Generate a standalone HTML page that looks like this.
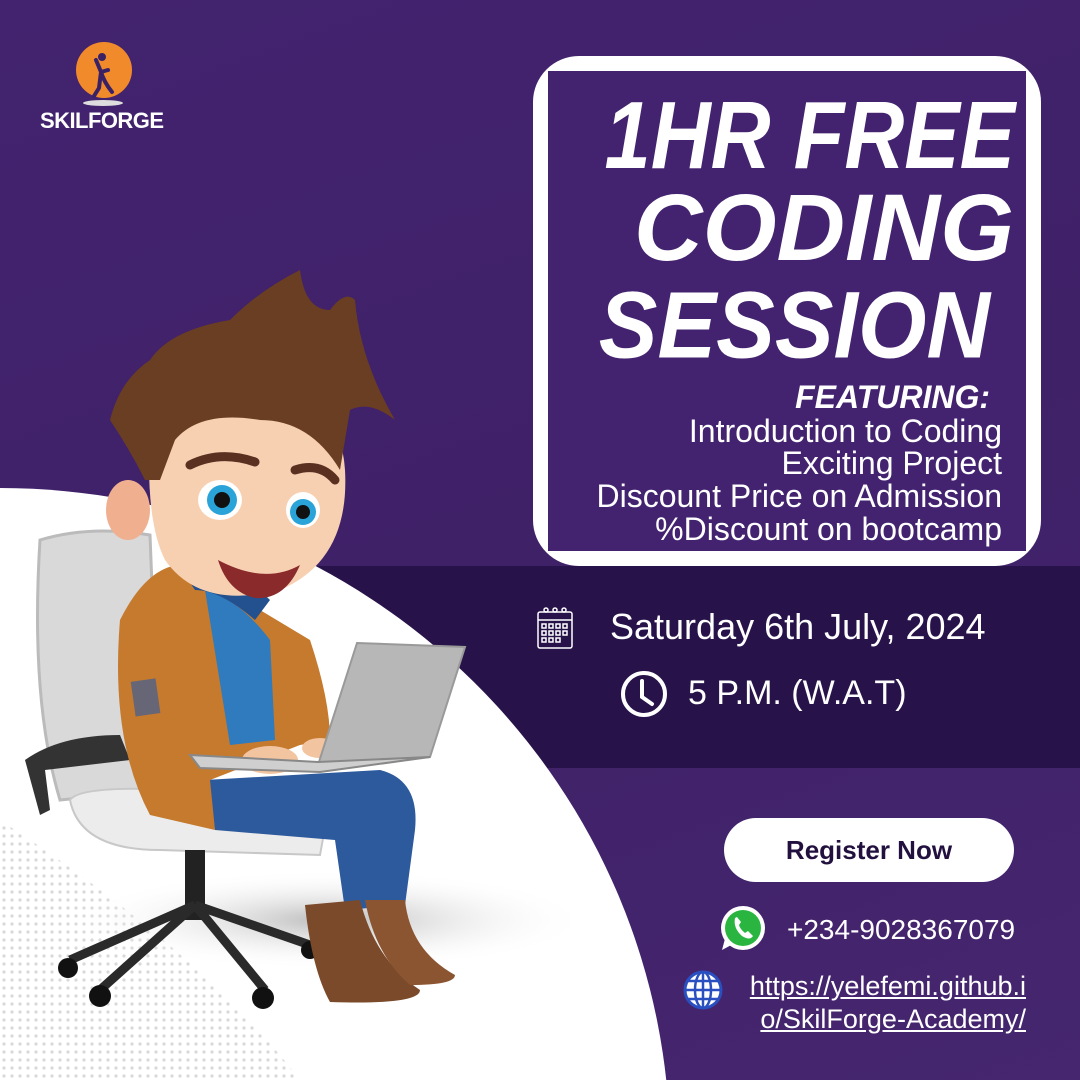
<!DOCTYPE html>
<html><head><meta charset="utf-8"><style>
*{margin:0;padding:0;box-sizing:border-box}
html,body{width:1080px;height:1080px;overflow:hidden}
body{position:relative;font-family:"Liberation Sans",sans-serif;background:linear-gradient(160deg,#43236f 0%,#3f2168 50%,#45266f 100%)}
.abs{position:absolute}
.band{left:0;top:566px;width:1080px;height:202px;background:#27124a}
.box{left:533px;top:56px;width:508px;height:510px;background:#fff;border-radius:46px}
.inner{left:548px;top:71px;width:478px;height:480px;background:#43236f}
.t{color:#fff;font-weight:bold;font-style:italic;text-align:right;white-space:nowrap;transform-origin:right center}
.l{color:#fff;font-size:32px;line-height:33px;text-align:right;white-space:nowrap;right:78px}
</style></head><body>
<div class="abs band"></div>
<div class="abs box"></div>
<div class="abs inner"></div>
<div class="abs t" style="right:65px;top:88px;font-size:83px;line-height:96px;transform:scaleY(1.15)">1HR FREE</div>
<div class="abs t" style="right:66px;top:180px;font-size:95px;line-height:96px">CODING</div>
<div class="abs t" style="right:90px;top:277px;font-size:88px;line-height:96px;transform:scaleY(1.08)">SESSION</div>
<div class="abs t" style="right:90px;top:380px;font-size:32px;line-height:34px">FEATURING:</div>
<div class="abs l" style="top:415px">Introduction to Coding</div>
<div class="abs l" style="top:447px">Exciting Project</div>
<div class="abs l" style="top:480px">Discount Price on Admission</div>
<div class="abs l" style="top:513px">%Discount on bootcamp</div>

<svg class="abs" style="left:0;top:0" width="1080" height="1080" viewBox="0 0 1080 1080">
<defs>
<radialGradient id="sh" cx="0.5" cy="0.5" r="0.5"><stop offset="0" stop-color="#bbb"/><stop offset="1" stop-color="#fff" stop-opacity="0"/></radialGradient>
<pattern id="dots" width="8" height="8" patternUnits="userSpaceOnUse"><circle cx="4" cy="4" r="1.6" fill="#cfcfcf"/></pattern>
</defs>
<ellipse cx="0" cy="1150" rx="670" ry="662" fill="#fff"/>
<path d="M0 820 L0 1080 L300 1080 Q200 950 0 820Z" fill="url(#dots)" opacity="0.8"/>
<ellipse cx="330" cy="920" rx="260" ry="50" fill="url(#sh)"/>
<circle cx="104" cy="70" r="28" fill="#f08a2a"/>
<path d="M96 60 L101 72 L99 88 L94 96 M101 72 L108 70 M101 72 Q104 82 112 92" stroke="#3a2166" stroke-width="4" fill="none" stroke-linecap="round"/>
<circle cx="102" cy="57" r="4" fill="#3a2166"/>
<ellipse cx="103" cy="103" rx="20" ry="3" fill="#ddd"/>
<text x="40" y="128" font-family="Liberation Sans" font-weight="bold" font-size="22" fill="#fff" textLength="124">SKILFORGE</text>
<path d="M40 540 Q90 525 150 535 L160 790 L60 800 Q30 700 40 540Z" fill="#d9d9d9" stroke="#bbb" stroke-width="3"/>
<path d="M25 760 Q60 735 120 735 L130 760 L45 770 L50 810 L40 815Z" fill="#333"/>
<path d="M70 800 Q80 785 180 790 L330 800 L320 855 L160 850 Q80 850 70 800Z" fill="#ececec" stroke="#c8c8c8" stroke-width="2"/>
<rect x="185" y="850" width="20" height="70" fill="#222"/>
<path d="M195 905 L70 960 M195 905 L100 990 M195 905 L265 990 M195 905 L310 945" stroke="#2a2a2a" stroke-width="9"/>
<circle cx="68" cy="968" r="10" fill="#111"/><circle cx="100" cy="996" r="11" fill="#111"/><circle cx="263" cy="998" r="11" fill="#111"/><circle cx="310" cy="950" r="9" fill="#111"/>
<path d="M205 780 L380 770 Q420 780 415 830 L405 905 L345 910 L335 840 L215 830Z" fill="#2c5a9c"/>
<path d="M305 905 L360 900 Q375 960 420 990 Q420 1005 330 1002 Q312 970 305 905Z" fill="#7a4a2a"/>
<path d="M365 900 L405 900 Q410 950 455 975 Q455 985 410 985 Q375 955 365 900Z" fill="#8b5532"/>
<path d="M120 620 Q150 560 190 565 L260 610 L310 640 Q330 700 330 740 L300 745 L210 780 L215 830 L150 815 Q110 740 120 620Z" fill="#c57a2e"/>
<path d="M205 590 Q240 600 270 640 L275 740 L230 745 Z" fill="#2f7bbd"/>
<path d="M180 568 Q230 560 270 600 L255 620 Q220 590 195 590Z" fill="#23508f"/>
<rect x="133" y="680" width="25" height="35" fill="#667" transform="rotate(-8 145 697)"/>
<ellipse cx="270" cy="760" rx="28" ry="14" fill="#f2c4a0"/>
<ellipse cx="320" cy="748" rx="18" ry="10" fill="#f2c4a0"/>
<path d="M357 643 L465 647 L430 757 L318 765Z" fill="#b7b7b7" stroke="#999" stroke-width="2"/>
<path d="M190 755 L318 762 L430 757 L320 772 L200 768Z" fill="#cfcfcf" stroke="#888" stroke-width="2"/>
<ellipse cx="128" cy="510" rx="22" ry="30" fill="#f0b090"/>
<path d="M150 430 Q160 380 250 380 Q340 390 345 470 Q350 560 280 590 Q200 610 165 560 Q145 520 150 430Z" fill="#f7d0b2"/>
<path d="M190 465 Q220 450 255 462" stroke="#5a3020" stroke-width="9" fill="none" stroke-linecap="round"/>
<path d="M295 470 Q320 462 335 480" stroke="#5a3020" stroke-width="9" fill="none" stroke-linecap="round"/>
<ellipse cx="220" cy="500" rx="22" ry="20" fill="#fff"/><circle cx="222" cy="500" r="15" fill="#2aa3d9"/><circle cx="222" cy="500" r="8" fill="#111"/>
<ellipse cx="303" cy="510" rx="17" ry="18" fill="#fff"/><circle cx="303" cy="512" r="13" fill="#2aa3d9"/><circle cx="303" cy="512" r="7" fill="#111"/>
<path d="M218 560 Q265 585 300 565 Q285 600 255 598 Q228 592 218 560Z" fill="#8a2a2a"/>
<path d="M110 420 Q120 380 150 360 Q170 330 230 320 Q260 290 300 270 Q305 310 330 310 Q345 290 355 300 Q360 360 395 420 Q370 400 350 410 Q345 440 340 470 Q310 420 260 420 Q200 410 175 440 L160 480 L145 480 Q130 450 110 420Z" fill="#6a3e22"/>
<g stroke="#fff" stroke-width="1.5" fill="none">
<rect x="538" y="612" width="34" height="36" rx="2"/>
<line x1="538" y1="620" x2="572" y2="620"/>
<circle cx="546" cy="610" r="2"/><circle cx="555" cy="610" r="2"/><circle cx="564" cy="610" r="2"/>
<rect x="542" y="624" width="4" height="4"/><rect x="549" y="624" width="4" height="4"/><rect x="556" y="624" width="4" height="4"/><rect x="563" y="624" width="4" height="4"/>
<rect x="542" y="631" width="4" height="4"/><rect x="549" y="631" width="4" height="4"/><rect x="556" y="631" width="4" height="4"/><rect x="563" y="631" width="4" height="4"/>
<rect x="542" y="638" width="4" height="4"/><rect x="549" y="638" width="4" height="4"/><rect x="556" y="638" width="4" height="4"/>
</g>
<circle cx="644" cy="694" r="21" stroke="#fff" stroke-width="4" fill="none"/>
<path d="M642 681 L642 697 L652 704" stroke="#fff" stroke-width="4" fill="none" stroke-linecap="round"/>
<circle cx="743" cy="928" r="22" fill="#fff"/>
<path d="M722 950 L726 935 L735 943Z" fill="#fff"/>
<circle cx="743" cy="928" r="18" fill="#2ab540"/>
<path d="M735 918 Q733 928 742 936 Q750 941 753 936 L748 931 L745 933 Q740 929 739 925 L741 922 L737 917Z" fill="#fff"/>
<circle cx="703" cy="990" r="18" fill="#fff" stroke="#2a4fc0" stroke-width="3"/>
<g stroke="#2a4fc0" stroke-width="2.5" fill="none"><ellipse cx="703" cy="990" rx="8" ry="18"/><line x1="703" y1="972" x2="703" y2="1008"/><line x1="685" y1="990" x2="721" y2="990"/><line x1="688" y1="981" x2="718" y2="981"/><line x1="688" y1="999" x2="718" y2="999"/></g>
</svg>

<div class="abs" style="left:610px;top:606px;color:#fff;font-size:36px;line-height:42px;white-space:nowrap">Saturday 6th July, 2024</div>
<div class="abs" style="left:688px;top:673px;color:#fff;font-size:34px;line-height:40px;white-space:nowrap">5 P.M. (W.A.T)</div>
<div class="abs" style="left:724px;top:818px;width:290px;height:64px;border-radius:32px;background:#fff;color:#22113f;font-weight:bold;font-size:26px;line-height:64px;text-align:center">Register Now</div>
<div class="abs" style="left:787px;top:913px;color:#fff;font-size:28px;line-height:34px;white-space:nowrap">+234-9028367079</div>
<div class="abs" style="right:54px;top:970px;color:#fff;font-size:27px;line-height:33px;text-align:right;text-decoration:underline;white-space:nowrap">https://yelefemi.github.i<br>o/SkilForge-Academy/</div>
</body></html>
